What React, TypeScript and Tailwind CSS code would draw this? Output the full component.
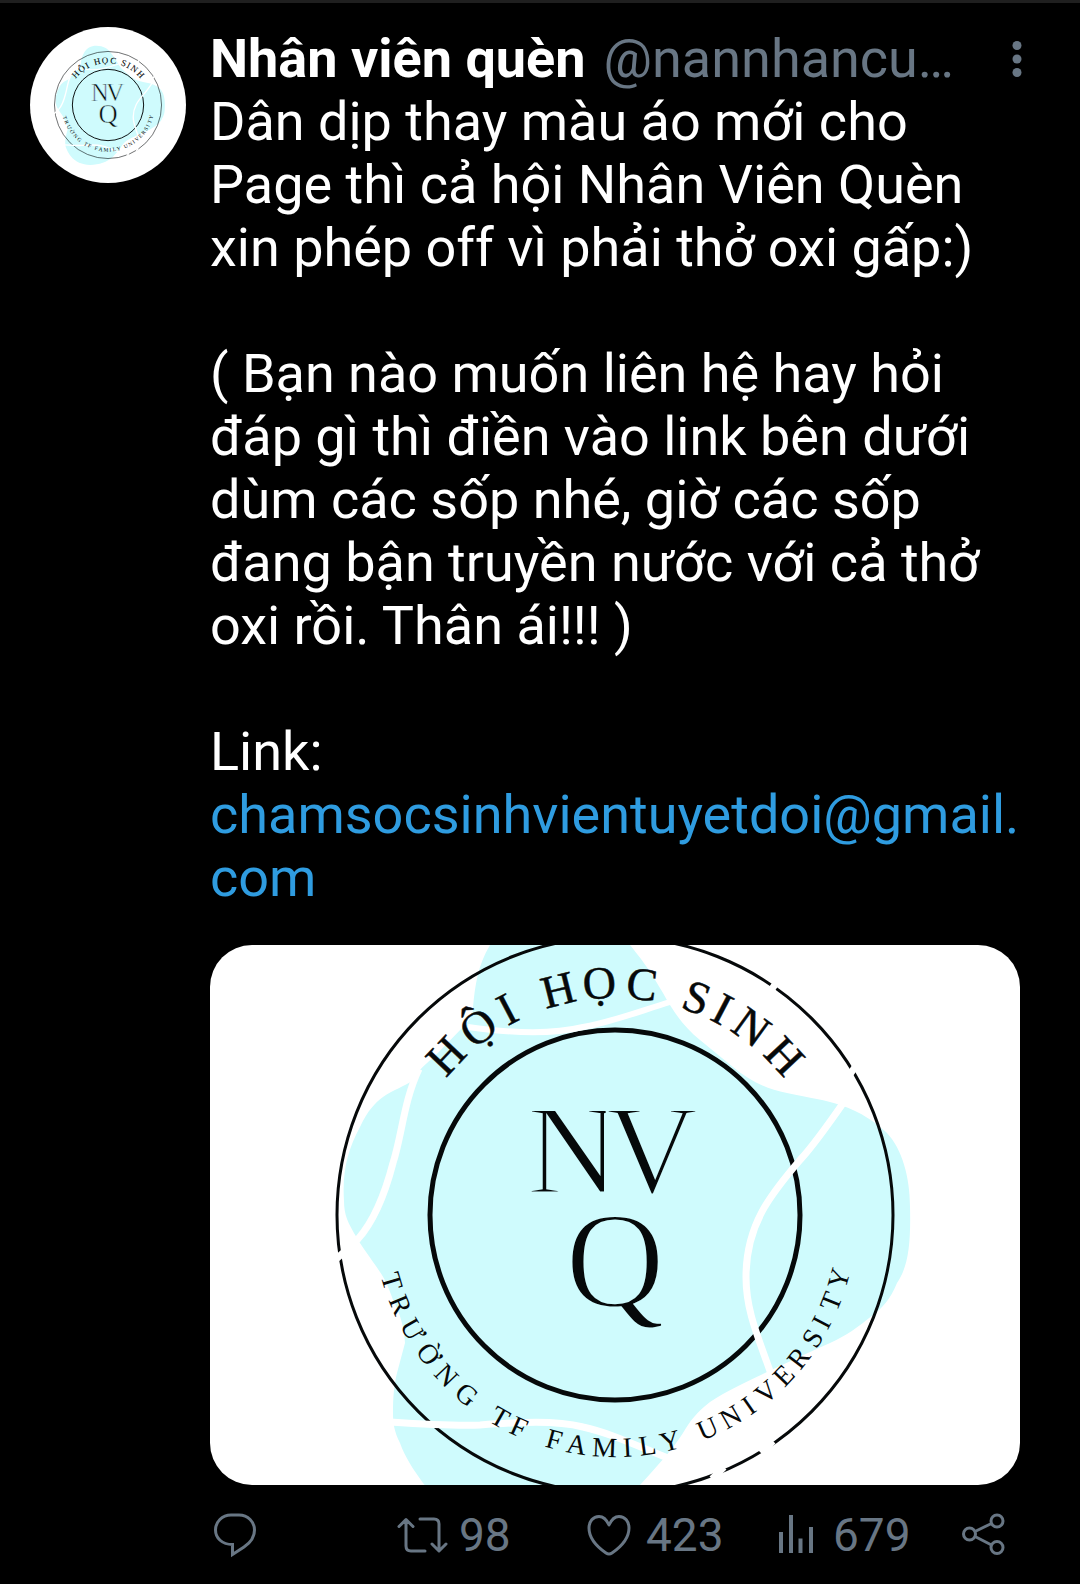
import type { ReactNode } from "react";

type ArcGlyph = [char: string, angle: number];

type Action = {
  label: string;
  count: string | null;
  icon: ReactNode;
};

const TOP_RADIUS = 217;
const BOTTOM_RADIUS = 242;

// Angles are in degrees, measured from the vertical axis of the seal.
const TOP_GLYPHS: ArcGlyph[] = [
  ["H", -46.7], ["Ộ", -36.2], ["I", -27.7], [" ", -21],
  ["H", -14.3], ["Ọ", -3.9], ["C", 6.6], [" ", 14],
  ["S", 20.6], ["I", 27.6], ["N", 36], ["H", 46.8],
];

const BOTTOM_GLYPHS: ArcGlyph[] = [
  ["T", -73.5], ["R", -67.3], ["Ư", -60.5], ["Ờ", -53.3], ["N", -46.4], ["G", -39.6], [" ", -34],
  ["T", -29.7], ["F", -24.5], [" ", -20],
  ["F", -15.2], ["A", -9.4], ["M", -2.7], ["I", 3.1], ["L", 8], ["Y", 13.6], [" ", 18],
  ["U", 23.3], ["N", 29.9], ["I", 35.1], ["V", 40.5], ["E", 46.3], ["R", 52.1], ["S", 58], ["I", 62.5], ["T", 68.1], ["Y", 74],
];

function arcText(glyphs: ArcGlyph[]): string {
  return glyphs.map(([char]) => char).join("");
}

function arcOffsets(glyphs: ArcGlyph[], radius: number): string {
  return glyphs.map(([, angle]) => Math.round(((angle + 90) * Math.PI * radius) / 180)).join(" ");
}

function Seal({ id, viewBox, className }: { id: string; viewBox: string; className: string }) {
  return (
    <svg viewBox={viewBox} className={className} role="img" aria-label="Hội Học Sinh NVQ">
      <defs>
        <path id={`${id}-top`} d="M188 270A217 217 0 0 1 622 270" />
        <path id={`${id}-bottom`} d="M163 270A242 242 0 0 0 647 270" />
      </defs>

      <path
        fill="#cffbfd"
        d="M280 0C295 -25 315 -37 345 -37C380 -37 405 -22 420 0C436 20 440 26 453 48C464 68 474 82 490 95L523 122C540 136 556 144 577 148C600 153 616 155 630 160C652 167 666 178 677 188C692 204 700 232 700 262C701 300 698 322 687 338C680 355 672 363 663 370C648 382 636 391 620 398C598 408 578 417 557 427C536 437 516 446 500 457C486 468 480 476 473 488C462 505 450 518 430 540C400 566 360 581 312 581C270 581 236 566 213 538C203 524 195 512 190 498C184 486 183 478 183 468C183 452 184 440 187 428L195 398C194 382 190 368 183 355C178 340 174 333 170 327C160 312 152 302 147 293C138 278 134 270 134 256C132 226 138 204 150 182C158 165 165 158 173 152C184 144 194 142 203 135C208 126 214 120 223 113L253 82C259 76 263 70 263 62C265 40 268 20 280 0Z"
      />

      <g fill="none" stroke="#06090a">
        <circle cx="405" cy="270" r="278" strokeWidth="3" />
        <circle cx="405" cy="270" r="185" strokeWidth="5" />
      </g>

      <g fill="none" stroke="#fff" strokeWidth="7">
        <path d="M209 124C194 155 192 190 183 218C176 245 164 276 148 294L122 318" />
        <path d="M258 82C300 88 340 90 373 82C402 77 430 66 460 57" strokeWidth="6" />
        <path d="M636 154C618 180 604 200 590 215C560 250 536 280 536 332C536 368 550 396 562 432" />
        <path d="M180 477C210 479 240 481 270 480C310 477 345 475 373 482C400 488 425 500 460 514" />
        <path d="M559 48L569 34M638 132L648 118M551 508L563 496M502 534L514 522" />
      </g>

      <g fill="#06090a" textAnchor="middle" className="font-['Liberation_Serif',serif]">
        <text fontSize="46" stroke="#06090a" strokeWidth="0.5">
          <textPath href={`#${id}-top`}>
            <tspan x={arcOffsets(TOP_GLYPHS, TOP_RADIUS)}>{arcText(TOP_GLYPHS)}</tspan>
          </textPath>
        </text>
        <text fontSize="28">
          <textPath href={`#${id}-bottom`}>
            <tspan x={arcOffsets(BOTTOM_GLYPHS, BOTTOM_RADIUS)}>{arcText(BOTTOM_GLYPHS)}</tspan>
          </textPath>
        </text>
        {/* An outline in the blob's colour thins the monogram's strokes */}
        <g stroke="#cffbfd" strokeWidth="3">
          <text x="363 442" y="248" fontSize="128">NV</text>
          <text x="405" y="362" fontSize="138">Q</text>
        </g>
      </g>
    </svg>
  );
}

const iconClass = "h-12 w-[54px] shrink-0 fill-none stroke-current stroke-3";

const ACTIONS: Action[] = [
  {
    label: "Reply",
    count: null,
    icon: (
      <svg viewBox="0 0 54 48" className={iconClass}>
        <path d="M23 4H31C40 4 46.500 11 46.500 19C46.500 27 42 32 36 36L24.500 43.500V33.500C14 33.500 7.500 27 7.500 19C7.500 11 14 4 23 4Z" />
      </svg>
    ),
  },
  {
    label: "Retweet",
    count: "98",
    icon: (
      <svg viewBox="0 0 54 48" className={iconClass} strokeLinecap="round" strokeLinejoin="round">
        <path d="M4 15.500L11 8.500L18 15.500M11 9.500V35Q11 40 16 40H30" />
        <path d="M25 8H39Q44 8 44 13V39M37 33L44 40L51 33" />
      </svg>
    ),
  },
  {
    label: "Like",
    count: "423",
    icon: (
      <svg viewBox="0 0 54 48" className={iconClass} strokeLinejoin="round">
        <path d="M27 14C24.500 8.500 21 5.500 17 5.500C11 5.500 7 10.500 7 17C7 27.500 16 36.500 24 42Q27 44 30 42C38 36.500 47 27.500 47 17C47 10.500 43 5.500 37 5.500C33 5.500 29.500 8.500 27 14Z" />
      </svg>
    ),
  },
  {
    label: "Views",
    count: "679",
    icon: (
      <svg viewBox="0 0 54 48" className="h-12 w-[54px] shrink-0 fill-none stroke-current stroke-4">
        <path d="M12 42V21M22 42V4M31.500 42V27.500M42 42V16" />
      </svg>
    ),
  },
  {
    label: "Share",
    count: null,
    icon: (
      <svg viewBox="0 0 54 48" className={iconClass}>
        <circle cx="13.500" cy="23" r="6" />
        <circle cx="41" cy="10" r="6" />
        <circle cx="41" cy="36.500" r="6" />
        <path d="M19 20.500L35.500 12.500M19 25.500L35.500 34" />
      </svg>
    ),
  },
];

function ActionBar() {
  return (
    <div className="-ml-0.5 mr-[70px] grid grid-cols-[1fr_1fr_1fr_1fr_54px] pt-[23px] text-[46px] leading-[54px] text-[#687684]">
      {ACTIONS.map(action => (
        <button key={action.label} type="button" aria-label={action.label} className="flex items-center gap-2.5">
          {action.icon}
          {action.count !== null && <span>{action.count}</span>}
        </button>
      ))}
    </div>
  );
}

export default function App() {
  return (
    <main className="min-h-screen border-t-3 border-[#1f1f1f] bg-black font-[Roboto,sans-serif] text-white">
      <article className="flex gap-6 pb-6 pl-[30px] pt-6">
        <a href="#profile" className="h-39 w-39 shrink-0 overflow-hidden rounded-full bg-white">
          <Seal id="avatar" viewBox="0 -135 810 810" className="block h-full w-full" />
        </a>

        <div className="min-w-0 flex-1 text-[54px] leading-[63px]">
          <header className="flex items-center justify-between pr-12">
            <div className="flex min-w-0 gap-[18px] whitespace-nowrap">
              <h1 className="font-bold">Nhân viên quèn</h1>
              <span className="text-[#687684]">@nannhancu…</span>
            </div>
            <button type="button" aria-label="More" className="text-[#687684]">
              <svg viewBox="0 0 30 42" className="h-[42px] w-[30px] fill-current">
                <circle cx="15" cy="7.500" r="4.500" />
                <circle cx="15" cy="21" r="4.500" />
                <circle cx="15" cy="34.500" r="4.500" />
              </svg>
            </button>
          </header>

          <div className="pr-10">
            <p>Dân dịp thay màu áo mới cho Page thì cả hội Nhân Viên Quèn xin phép off vì phải thở oxi gấp:)</p>
            <p className="mt-[63px]">
              ( Bạn nào muốn liên hệ hay hỏi đáp gì thì điền vào link bên dưới dùm các sốp nhé, giờ các sốp đang bận
              truyền nước với cả thở oxi rồi. Thân ái!!! )
            </p>
            <p className="mt-[63px]">
              Link:
              <br />
              <a href="mailto:chamsocsinhvientuyetdoi@gmail.com" className="text-[#2f9ce0]">
                chamsocsinhvientuyetdoi@gmail.
                <wbr />
                com
              </a>
            </p>
          </div>

          <div className="mr-[60px] mt-9 overflow-hidden rounded-[42px] bg-white">
            <Seal id="photo" viewBox="0 0 810 540" className="block w-full" />
          </div>

          <ActionBar />
        </div>
      </article>
    </main>
  );
}
